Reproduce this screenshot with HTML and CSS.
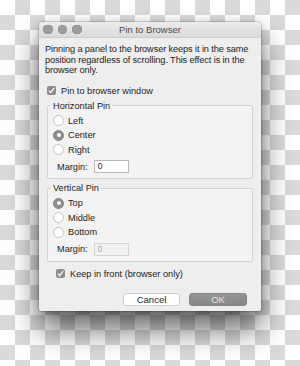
FILE: index.html
```html
<!DOCTYPE html>
<html lang="en">
<head>
    <meta charset="UTF-8">
    <meta name="viewport" content="width=device-width, initial-scale=1.0">
    <title>Pin to Browser</title>
    <link rel="stylesheet" href="styles.css">
</head>
<body>
    <div class="window">
        <div class="titlebar">
            <div class="lights"><span></span><span></span><span></span></div>
            <div class="title">Pin to Browser</div>
        </div>
        <div class="content">
            <p class="intro">Pinning a panel to the browser keeps it in the same position regardless of scrolling. This effect is in the browser only.</p>

            <div class="check pin">
                <span class="box"><svg viewBox="0 0 10 10" width="9" height="9"><path d="M2.2 5.2 L4.2 7.3 L7.9 2.4" fill="none" stroke="#fff" stroke-width="1.4"/></svg></span>
                Pin to browser window
            </div>

            <fieldset class="group">
                <legend>Horizontal Pin</legend>
                <div class="radio"><span class="dot"></span>Left</div>
                <div class="radio"><span class="dot on"></span>Center</div>
                <div class="radio"><span class="dot"></span>Right</div>
                <div class="margin-row"><span>Margin:</span><span class="field">0</span></div>
            </fieldset>

            <fieldset class="group">
                <legend>Vertical Pin</legend>
                <div class="radio"><span class="dot on"></span>Top</div>
                <div class="radio"><span class="dot"></span>Middle</div>
                <div class="radio"><span class="dot"></span>Bottom</div>
                <div class="margin-row"><span>Margin:</span><span class="field disabled">0</span></div>
            </fieldset>

            <div class="check keep">
                <span class="box"><svg viewBox="0 0 10 10" width="9" height="9"><path d="M2.2 5.2 L4.2 7.3 L7.9 2.4" fill="none" stroke="#fff" stroke-width="1.4"/></svg></span>
                Keep in front (browser only)
            </div>

            <div class="buttons">
                <div class="btn">Cancel</div>
                <div class="btn ok">OK</div>
            </div>
        </div>
    </div>
</body>
</html>
```

FILE: styles.css
```css
body {
    margin: 0;
    width: 300px;
    height: 366px;
    overflow: hidden;
    font-family: 'Liberation Sans', Arial, sans-serif;
    color: #1c1c1c;
    background-color: #fff;
    background-image: conic-gradient(#dadada 25%, #fff 0 50%, #dadada 0 75%, #fff 0);
    background-size: 30px 30px;
    padding-top: 22px;
    box-sizing: border-box;
}
.window {
    width: 222px;
    margin: 0 auto;
    background: #eeeeee;
    border-radius: 4px 4px 2px 2px;
    box-shadow: 0 0 0 1px rgba(0,0,0,0.12), 0 2px 8px rgba(0,0,0,0.2), 0 18px 30px rgba(0,0,0,0.6);
    overflow: hidden;
}
.titlebar {
    height: 16px;
    background: linear-gradient(#ececec, #dadada);
    border-bottom: 1px solid #cdcdcd;
    box-sizing: border-box;
    display: flex;
    align-items: center;
    position: relative;
}
.lights {
    display: flex;
    gap: 5px;
    margin-left: 4px;
}
.lights span {
    width: 9.5px;
    height: 9.5px;
    border-radius: 50%;
    background: #9d9d9d;
    box-shadow: inset 0 0 0 0.5px #888;
}
.title {
    position: absolute;
    left: 0;
    right: 0;
    text-align: center;
    font-size: 9.5px;
    color: #4a4a4a;
}
.content {
    padding: 6px 6px 5px 6px;
    font-size: 9.2px;
}
.intro {
    margin: 0;
    line-height: 10.5px;
    letter-spacing: -0.1px;
}
.check {
    display: flex;
    align-items: center;
    height: 12px;
    gap: 5px;
}
.check.pin {
    margin: 9px 0 0 2px;
}
.check.keep {
    margin: 6px 0 0 11px;
}
.box {
    width: 9px;
    height: 9px;
    border-radius: 2px;
    background: #8e8e8e;
    display: flex;
}
.group {
    margin: 3px 2px 0 2px;
    padding: 2px 6px 5px 5px;
    border: 1px solid #d2d2d2;
    border-radius: 2px;
    background: #f3f3f3;
}
.group legend {
    padding: 0 2px;
    margin-left: -2px;
    height: 12px;
    line-height: 12px;
}
.radio {
    display: flex;
    align-items: center;
    height: 14.5px;
    gap: 4px;
}
.dot {
    width: 11px;
    height: 11px;
    box-sizing: border-box;
    border-radius: 50%;
    background: #fff;
    border: 1px solid #c4c4c4;
    display: flex;
    align-items: center;
    justify-content: center;
}
.dot.on {
    background: #8c8c8c;
    border-color: #858585;
}
.dot.on::after {
    content: "";
    width: 4px;
    height: 4px;
    border-radius: 50%;
    background: #fff;
}
.margin-row {
    display: flex;
    align-items: center;
    margin: 3px 0 0 4px;
    gap: 6px;
}
.field {
    width: 35px;
    height: 13px;
    box-sizing: border-box;
    background: #fff;
    border: 1px solid #b8b8b8;
    padding-left: 3px;
    font-size: 8.5px;
    line-height: 11px;
}
.field.disabled {
    background: #f1f1f1;
    border-color: #d4d4d4;
    color: #a8a8a8;
}
.buttons {
    display: flex;
    justify-content: flex-end;
    gap: 9px;
    margin: 13px 8px 0 0;
}
.btn {
    width: 57px;
    height: 13px;
    box-sizing: border-box;
    border-radius: 3px;
    background: #fff;
    border: 1px solid #d0d0d0;
    text-align: center;
    line-height: 11px;
    font-size: 9.5px;
}
.btn.ok {
    width: 58px;
    background: linear-gradient(#949494, #878787);
    border-color: #858585;
    color: #e6e6e6;
}
```
